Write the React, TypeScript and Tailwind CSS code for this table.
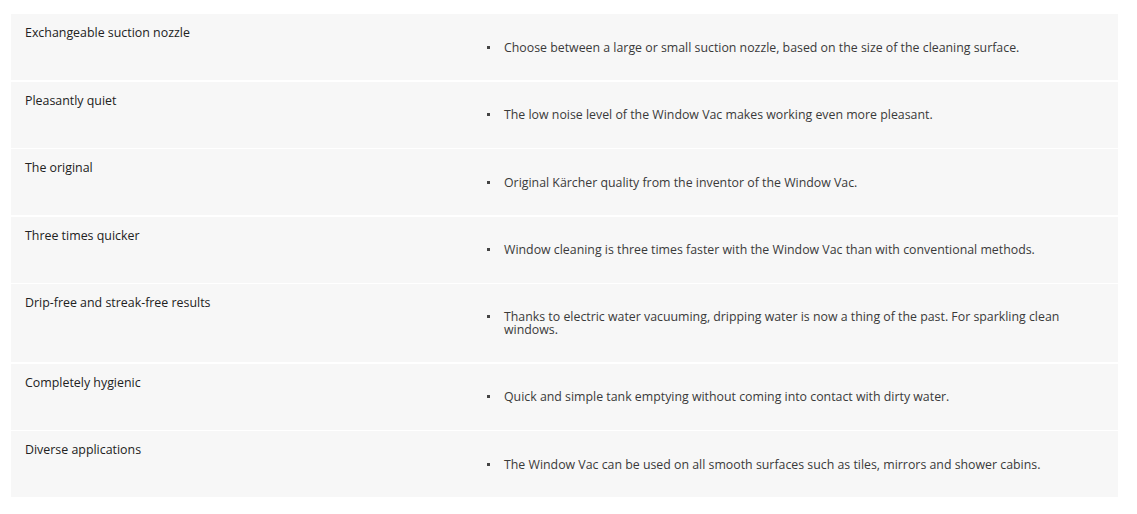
const rows = [
  {
    title: 'Exchangeable suction nozzle',
    text: 'Choose between a large or small suction nozzle, based on the size of the cleaning surface.',
  },
  {
    title: 'Pleasantly quiet',
    text: 'The low noise level of the Window Vac makes working even more pleasant.',
  },
  {
    title: 'The original',
    text: 'Original Kärcher quality from the inventor of the Window Vac.',
  },
  {
    title: 'Three times quicker',
    text: 'Window cleaning is three times faster with the Window Vac than with conventional methods.',
  },
  {
    title: 'Drip-free and streak-free results',
    text: 'Thanks to electric water vacuuming, dripping water is now a thing of the past. For sparkling clean windows.',
  },
  {
    title: 'Completely hygienic',
    text: 'Quick and simple tank emptying without coming into contact with dirty water.',
  },
  {
    title: 'Diverse applications',
    text: 'The Window Vac can be used on all smooth surfaces such as tiles, mirrors and shower cabins.',
  },
];

export default function App() {
  return (
    <div className="min-h-screen bg-white pt-[14px] pl-[11px] pr-[19px] font-['Open_Sans',sans-serif]">
      <div className="flex flex-col gap-[1.5px]">
        {rows.map((row) => (
          <div key={row.title} className="grid grid-cols-[463px_1fr] bg-[#f7f7f7] min-h-[66px]">
            <div className="pl-[14px] pt-[11px] text-[12.4px] leading-[16px] font-medium text-[#222]">
              {row.title}
            </div>
            <div className="flex items-center pr-[40px] py-[26px]">
              <ul className="list-none">
                <li className="flex text-[12.35px] leading-[13px] text-[#3a3a3a]">
                  <span className="w-[17px] shrink-0 pl-[13px] pt-[5px]">
                    <span className="block w-[3px] h-[3px] bg-[#444]" />
                  </span>
                  <span className="pl-[13px]">{row.text}</span>
                </li>
              </ul>
            </div>
          </div>
        ))}
      </div>
    </div>
  );
}
